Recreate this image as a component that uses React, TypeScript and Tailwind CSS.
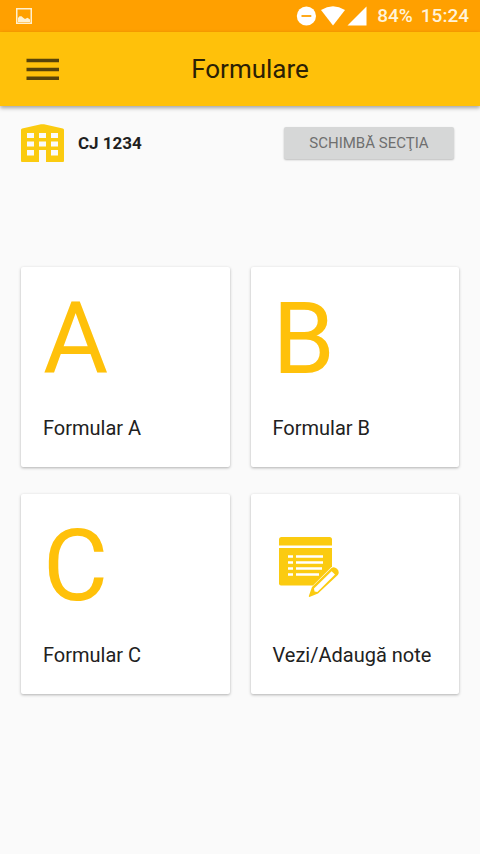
import { ReactNode } from "react";

function StatusBar() {
  return (
    <div className="flex h-8 items-center justify-between bg-[#ffa000] pl-4 pr-[11px] text-white">
      <svg width="16" height="16" viewBox="0 0 16 16" className="text-[#fff0cf]" fill="none">
        <rect x="0.75" y="0.75" width="14.5" height="14.5" stroke="currentColor" strokeWidth="1.5" />
        <path d="M2 14V10L3.5 8.3H5.5L7.5 10L9 11L11.5 9.8L14 11.5V14Z" fill="currentColor" />
      </svg>

      <div className="flex items-center">
        <svg width="20" height="20" viewBox="0 0 20 20">
          <circle cx="10.4" cy="10" r="9.6" fill="currentColor" />
          <path d="M5.5 10H15.3" stroke="#ffa000" strokeWidth="1.8" />
        </svg>
        <svg width="24" height="20" viewBox="0 0 24 20" className="ml-[5px]">
          <path d="M0 4Q12 -3.4 24 4L12 19.5Z" fill="currentColor" />
        </svg>
        <svg width="20" height="20" viewBox="0 0 20 20" className="ml-0.5">
          <path d="M19.5 0.5V19.5H0.5Z" fill="currentColor" />
        </svg>
        <span className="ml-2.5 text-[19px] leading-6 font-medium text-[#fff3d9]">84%</span>
        <span className="ml-2 text-[19px] leading-6 font-medium text-[#fff3d9]">15:24</span>
      </div>
    </div>
  );
}

function AppBar() {
  return (
    <header className="relative flex h-[74px] items-center justify-center bg-[#ffc10a] shadow-[0_2px_4px_rgba(0,0,0,0.35)]">
      <button aria-label="Menu" className="absolute left-[26px]">
        <svg width="34" height="24" viewBox="0 0 34 24" className="text-[#594409]">
          <path d="M0.5 3.6H33M0.5 12.6H33M0.5 21.2H33" stroke="currentColor" strokeWidth="3.5" />
        </svg>
      </button>
      <h1 className="pl-5 text-[26px] leading-8 text-[#2b2005]">Formulare</h1>
    </header>
  );
}

function BuildingIcon() {
  return (
    <svg width="43" height="38" viewBox="0 0 43 38" className="text-[#fbcb10]">
      <path
        fill="currentColor"
        fillRule="evenodd"
        d="M1.2 4.4L20 0.3Q21.5 0 23 0.3L41.8 4.4Q43 4.7 43 6V37Q43 38 42 38H25V26H18V38H1Q0 38 0 37V6Q0 4.7 1.2 4.4ZM6 9V14H13V9ZM18 9V14H25V9ZM30 9V14H37V9ZM6 17.5V22.5H13V17.5ZM18 17.5V22.5H25V17.5ZM30 17.5V22.5H37V17.5ZM6 26V31.5H13V26ZM30 26V31.5H37V26Z"
      />
    </svg>
  );
}

function NotesIcon() {
  return (
    <svg width="60" height="62" viewBox="0 -2 60 62" className="text-[#fbcb10]">
      <path fill="currentColor" d="M0 8.5V2.5Q0 0 2.5 0H50.5Q53 0 53 2.5V8.5Z" />
      <path fill="currentColor" d="M0 11H53V29.5L34 48.5H2Q0 48.5 0 46.5Z" />
      <path
        stroke="#fff"
        strokeWidth="2.6"
        d="M9 19.5H14M17 19.5H44M9 25.5H14M17 25.5H44M9 31.5H14M17 31.5H43M9 37.5H14M17 37.5H40"
      />
      {/* pencil */}
      <path
        d="M30 58.5L33 50L52.5 31Q55 29 58 31.8Q61 35 58.8 38L39 56.5L31 59.8Q29.3 60.2 30 58.5Z"
        fill="currentColor"
      />
      <path d="M35 51.5L52.6 34.2L56 37.6L38.4 54.9L35.5 54.4Z" fill="#fff" />
    </svg>
  );
}

function FormCard({ label, children }: { label: string; children: ReactNode }) {
  return (
    <button className="flex h-[200px] flex-col justify-between rounded-xs bg-white px-[22px] pb-6 pt-[22px] text-left shadow-[0_1px_3px_rgba(0,0,0,0.3)]">
      <span className="flex h-[100px] items-center">{children}</span>
      <span className="text-xl leading-[30px] text-[#212121]">{label}</span>
    </button>
  );
}

const forms = ["A", "B", "C"];

export default function App() {
  return (
    <div className="min-h-screen bg-[#fafafa] font-[Roboto,sans-serif]">
      <StatusBar />
      <AppBar />

      <main className="px-[21px] pt-[18px]">
        <div className="flex items-center justify-between pr-[5px]">
          <div className="flex items-center gap-3.5">
            <BuildingIcon />
            <span className="text-[17px] leading-6 font-bold text-[#1f1f1f]">CJ 1234</span>
          </div>
          <button className="h-8 w-[170px] rounded-xs bg-[#d6d7d7] text-[15px] leading-5 text-[#6f6f6f] shadow-[0_1px_2px_rgba(0,0,0,0.25)]">
            SCHIMBĂ SECŢIA
          </button>
        </div>

        <div className="mt-[105px] grid grid-cols-2 gap-x-[21px] gap-y-[27px]">
          {forms.map((form) => (
            <FormCard key={form} label={`Formular ${form}`}>
              <span className="text-[100px] leading-[100px] text-[#ffc10a]">{form}</span>
            </FormCard>
          ))}
          <FormCard label="Vezi/Adaugă note">
            <span className="pl-1.5">
              <NotesIcon />
            </span>
          </FormCard>
        </div>
      </main>
    </div>
  );
}
